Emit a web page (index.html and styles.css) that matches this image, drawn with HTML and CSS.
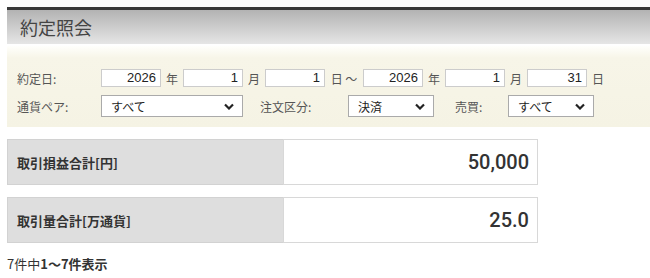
FILE: index.html
```html
<!DOCTYPE html>
<html lang="ja">
<head>
<meta charset="utf-8">
<link rel="stylesheet" href="styles.css">
</head>
<body>
<div class="page">
  <div class="header"><h1 class="title">約定照会</h1></div>
  <div class="panel">
    <div class="row">
      <span class="label">約定日:</span>
      <span class="field">2026</span><span class="unit">年</span>
      <span class="field">1</span><span class="unit">月</span>
      <span class="field">1</span><span class="unit wide">日 ～</span>
      <span class="field">2026</span><span class="unit">年</span>
      <span class="field">1</span><span class="unit">月</span>
      <span class="field">31</span><span class="unit">日</span>
    </div>
    <div class="row row2">
      <span class="label">通貨ペア:</span>
      <span class="select s-wide">すべて<svg class="chev" viewBox="0 0 10 7"><path d="M1 1.5 L5 5.5 L9 1.5" /></svg></span>
      <span class="label2 l-order">注文区分:</span>
      <span class="select s-small">決済<svg class="chev" viewBox="0 0 10 7"><path d="M1 1.5 L5 5.5 L9 1.5" /></svg></span>
      <span class="label2 l-side">売買:</span>
      <span class="select s-small">すべて<svg class="chev" viewBox="0 0 10 7"><path d="M1 1.5 L5 5.5 L9 1.5" /></svg></span>
    </div>
  </div>
  <div class="card">
    <div class="card-label">取引損益合計[円]</div>
    <div class="card-value">50,000</div>
  </div>
  <div class="card">
    <div class="card-label">取引量合計[万通貨]</div>
    <div class="card-value">25.0</div>
  </div>
  <p class="count">7件中<span class="bold">1～7件表示</span></p>
</div>
</body>
</html>
```
FILE: styles.css
```css
html, body {
  margin: 0;
  padding: 0;
  background: #fff;
}
.page {
  padding: 7px 0 0 7px;
  font-family: "Noto Sans CJK JP", "Noto Sans", sans-serif;
  color: #444;
}
.header {
  border-top: 3px solid #3a3a3a;
  height: 34px;
  background: linear-gradient(#b3b3b3, #e6e6e6);
  display: flex;
  align-items: center;
  padding-left: 13px;
}
.title {
  margin: 0;
  font-size: 18px;
  font-weight: normal;
  color: #444;
  line-height: 1;
}
.panel {
  margin-top: 2px;
  height: 81px;
  box-sizing: border-box;
  padding: 23px 0 0 10px;
  background: linear-gradient(#fffffc 0px, #f7f5e8 12px, #f5f3e4 100%);
}
.row {
  display: flex;
  align-items: center;
  height: 18px;
  font-size: 12px;
  color: #555;
}
.row2 {
  margin-top: 8px;
  height: 22px;
}
.label {
  width: 84px;
  flex: none;
}
.field {
  width: 60px;
  height: 18px;
  box-sizing: border-box;
  border: 1px solid #ccc;
  background: #fff;
  text-align: right;
  padding-right: 4px;
  font-family: "Liberation Sans", Arial, sans-serif;
  font-size: 13px;
  line-height: 16px;
  color: #222;
  flex: none;
}
.unit {
  width: 22px;
  text-align: center;
  flex: none;
}
.unit.wide {
  width: 38px;
}
.select {
  height: 22px;
  box-sizing: border-box;
  border: 1px solid #aaa;
  background: #fff;
  display: flex;
  align-items: center;
  justify-content: space-between;
  padding: 0 8px 0 9px;
  font-size: 12px;
  color: #222;
  flex: none;
}
.s-wide { width: 142px; }
.s-small { width: 86px; }
.chev {
  width: 10px;
  height: 7px;
  fill: none;
  stroke: #222;
  stroke-width: 2.2;
}
.label2 { flex: none; }
.l-order { width: 88px; margin-left: 17px; }
.l-side { width: 53px; margin-left: 21px; }
.card {
  display: flex;
  width: 531px;
  height: 46px;
  margin-top: 12px;
}
.card-label {
  width: 276px;
  box-sizing: border-box;
  background: #dedede;
  border: 1px solid #d2d2d2;
  border-right: none;
  display: flex;
  align-items: center;
  padding-left: 9px;
  font-size: 13px;
  font-weight: bold;
  color: #333;
}
.card-value {
  flex: 1;
  box-sizing: border-box;
  border: 1px solid #d8d8d8;
  background: #fff;
  display: flex;
  align-items: center;
  justify-content: flex-end;
  padding-right: 8px;
  font-family: Roboto, "Liberation Sans", sans-serif;
  font-size: 20px;
  font-weight: 500;
  color: #333;
}
.count {
  margin: 11px 0 0;
  font-size: 13px;
  color: #333;
}
.bold { font-weight: bold; }
```
